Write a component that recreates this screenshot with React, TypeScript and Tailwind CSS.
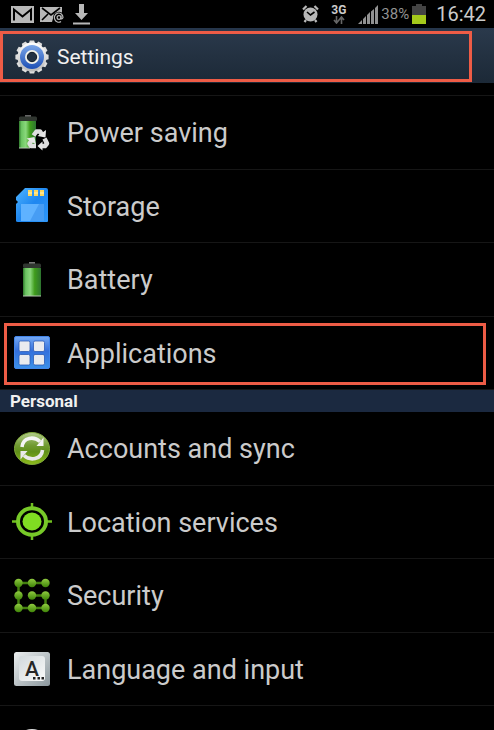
import type { ReactNode } from "react";

function GmailIcon() {
  return (
    <svg width="23" height="17" viewBox="0 0 23 17" aria-hidden="true">
      <rect width="23" height="17" fill="#b8b8b8" />
      <path d="M3 14.500V3.500L11.500 10.500L20 3.500V14.500" fill="none" stroke="#000" strokeWidth="2" />
    </svg>
  );
}

function MailIcon() {
  return (
    <svg width="25" height="18" viewBox="0 0 25 18" aria-hidden="true">
      <path d="M0 2H22V9L14 10L12 17H0Z" fill="#b8b8b8" />
      <path d="M2 3L11 10L20 3M2 15L8 9M20 14L14 9" fill="none" stroke="#000" strokeWidth="1.6" />
      <circle cx="19" cy="12.500" r="5.800" fill="#000" />
      <circle cx="19" cy="12.500" r="1.900" fill="none" stroke="#b8b8b8" strokeWidth="1.200" />
      <path d="M21 10.500V13.500Q22 14.500 23 12.500A4.300 4.600 0 1 0 21 16.500" fill="none" stroke="#b8b8b8" strokeWidth="1.200" />
    </svg>
  );
}

function DownloadIcon() {
  return (
    <svg width="17" height="21" viewBox="0 0 17 21" fill="#b8b8b8" aria-hidden="true">
      <path d="M6 0H11V9H15L8.500 16L2 9H6Z" />
      <rect y="18.500" width="17" height="2" />
    </svg>
  );
}

function AlarmIcon() {
  return (
    <svg width="17" height="18" viewBox="0 0 17 18" aria-hidden="true">
      <path d="M1 4.500L4.500 1M16 4.500L12.500 1M4 15L2.500 17M13 15L14.500 17" stroke="#b8b8b8" strokeWidth="2.2" />
      <circle cx="8.500" cy="9.500" r="7" fill="#b8b8b8" />
      <path d="M5 7L8.500 10L12.500 7" fill="none" stroke="#000" strokeWidth="1.6" />
    </svg>
  );
}

function DataIcon() {
  return (
    <svg width="12" height="8" viewBox="0 0 12 8" aria-hidden="true">
      <path d="M3.500 0V6M1 4L3.500 7L6 4M8.500 8V2M6 4L8.500 1L11 4" fill="none" stroke="#666" strokeWidth="1.6" />
    </svg>
  );
}

function SignalIcon() {
  return (
    <svg width="20" height="19" viewBox="0 0 20 19" fill="#929292" aria-hidden="true">
      <path d="M0 19L4 15V19ZM5 14L8 11V19H5ZM9 10L12 7V19H9ZM13 6.500L16 4V19H13ZM17 3L20 0V19H17Z" />
    </svg>
  );
}

function StatusBatteryIcon() {
  return (
    <svg width="14" height="20" viewBox="0 0 14 20" aria-hidden="true">
      <path d="M4 0H10V2H14V20H0V2H4Z" fill="#444" />
      <rect y="11" width="14" height="9" fill="#a5c91b" />
    </svg>
  );
}

function GearIcon() {
  const teeth = [0, 30, 60, 90, 120, 150, 180, 210, 240, 270, 300, 330];
  return (
    <svg width="36" height="34" viewBox="0 0 36 34" aria-hidden="true">
      <defs>
        <linearGradient id="gear-metal" x2="0" y2="1">
          <stop stopColor="#fff" />
          <stop offset="1" stopColor="#b9b9b9" />
        </linearGradient>
        <linearGradient id="gear-blue" x2="0" y2="1">
          <stop stopColor="#7ba6e8" />
          <stop offset="1" stopColor="#1d4fb5" />
        </linearGradient>
      </defs>
      {teeth.map((angle) => (
        <path key={angle} d="M14.800 4L15.800 .4H20.200L21.200 4Z" fill="#dedede" transform={`rotate(${angle} 18 17)`} />
      ))}
      <circle cx="18" cy="17" r="14.500" fill="url(#gear-metal)" />
      <circle cx="18" cy="17" r="12" fill="url(#gear-blue)" />
      <circle cx="18" cy="17" r="7" fill="#f2f2ea" />
      <circle cx="18" cy="17" r="4.700" fill="#233244" stroke="#111b28" />
    </svg>
  );
}

function BatteryDefs({ id }: { id: string }) {
  return (
    <defs>
      <linearGradient id={id}>
        <stop stopColor="#2f7a2c" />
        <stop offset=".15" stopColor="#6cc462" />
        <stop offset=".4" stopColor="#8ad87c" />
        <stop offset=".65" stopColor="#3f9c1c" />
        <stop offset="1" stopColor="#2d7430" />
      </linearGradient>
    </defs>
  );
}

function PowerSavingIcon() {
  return (
    <svg width="38" height="38" viewBox="0 0 38 38" aria-hidden="true">
      <BatteryDefs id="power-green" />
      <rect x="12" y="1" width="6" height="3" fill="#666" />
      <rect x="6" y="2.500" width="18" height="4.500" rx="1.500" fill="#303630" />
      <rect x="6" y="7" width="17" height="27" fill="url(#power-green)" />
      <path d="M6 34H17" stroke="#b5c8b2" />
      {/* Recycling arrows */}
      <g fill="none" stroke="#dedede" strokeWidth="4.500" strokeLinejoin="round">
        <path d="M20.500 21.500L23.500 17.500H27L28.500 20" />
        <path d="M31.500 24.500L34 29.500L32 32H29" />
        <path d="M23 32H18L16.500 29.500L18.500 26.500" />
      </g>
      <path d="M24.500 22L32.500 23.500L33 16ZM29.500 27.500V36.500L24.500 32ZM13.500 24.500L21.500 23L23 30.500Z" fill="#e6e6e6" />
    </svg>
  );
}

function StorageIcon() {
  return (
    <svg width="38" height="38" viewBox="0 0 38 38" aria-hidden="true">
      <defs>
        <linearGradient id="card-blue" x2="1" y2="1">
          <stop stopColor="#4db4ff" />
          <stop offset=".5" stopColor="#1f87f0" />
          <stop offset="1" stopColor="#2f98fa" />
        </linearGradient>
      </defs>
      <path d="M12 1H33Q35 1 35 3V34Q35 35 34 35H5Q3 35 3 34V17L5 15L3 13V10Z" fill="url(#card-blue)" />
      <path d="M8 17H31V34H8Z" fill="#5fb2ff" />
      <path d="M26 17H31V34H17Z" fill="#479df4" />
      <path d="M15 3H19V9H15ZM21 3H25V9H21ZM27 3H31V9H27Z" fill="#ffd75a" />
      <path d="M15 6H19M21 6H25M27 6H31" stroke="#fff3bf" />
    </svg>
  );
}

function BatteryIcon() {
  return (
    <svg width="38" height="38" viewBox="0 0 38 38" aria-hidden="true">
      <BatteryDefs id="battery-green" />
      <rect x="16" y="1" width="6" height="3" fill="#777" />
      <rect x="10" y="2.500" width="18" height="4.500" rx="1.500" fill="#303630" />
      <rect x="10" y="7" width="18" height="28" fill="url(#battery-green)" />
      <path d="M10 35H28" stroke="#b5c8b2" />
    </svg>
  );
}

function ApplicationsIcon() {
  return (
    <svg width="38" height="38" viewBox="0 0 38 38" aria-hidden="true">
      <defs>
        <linearGradient id="apps-blue" x2="0" y2="1">
          <stop stopColor="#74a9f5" />
          <stop offset=".45" stopColor="#3470dc" />
          <stop offset="1" stopColor="#3b91ea" />
        </linearGradient>
      </defs>
      <rect x="1.500" y="2.500" width="35" height="32" rx="1.500" fill="url(#apps-blue)" stroke="#4385e8" />
      <g fill="#e9ebef" stroke="#2b5bb5" strokeWidth=".8">
        <rect x="6" y="7" width="11" height="10.500" rx="1.500" />
        <rect x="20.500" y="7" width="11" height="10.500" rx="1.500" />
        <rect x="6" y="20.500" width="11" height="10.500" rx="1.500" />
        <rect x="20.500" y="20.500" width="11" height="10.500" rx="1.500" />
      </g>
    </svg>
  );
}

function SyncIcon() {
  return (
    <svg width="38" height="38" viewBox="0 0 38 38" aria-hidden="true">
      <defs>
        <linearGradient id="sync-green" x2="0" y2="1">
          <stop stopColor="#b2cb8b" />
          <stop offset=".4" stopColor="#719b32" />
          <stop offset=".6" stopColor="#608f18" />
          <stop offset="1" stopColor="#8dbb1b" />
        </linearGradient>
      </defs>
      <ellipse cx="19" cy="18.500" rx="17.500" ry="16" fill="url(#sync-green)" stroke="#7fa73a" />
      <path d="M9 17C10 7 21 6 27 11.500" fill="none" stroke="#f4f4f4" strokeWidth="3.600" />
      <path d="M30.500 7.500V16H23.500Z" fill="#f4f4f4" />
      <path d="M29.500 20C28.500 30 17 31 11 25.500" fill="none" stroke="#e8e8e8" strokeWidth="3.600" />
      <path d="M7.500 29.500V21H14.500Z" fill="#e8e8e8" />
    </svg>
  );
}

function LocationIcon() {
  return (
    <svg width="40" height="38" viewBox="0 0 40 38" aria-hidden="true">
      <path d="M20 0V6M20 31V37M0 18.500H6M34 18.500H40" stroke="#70bf20" strokeWidth="2.5" />
      <ellipse cx="20" cy="18.500" rx="14" ry="13.200" fill="none" stroke="#77c928" strokeWidth="4" />
      <ellipse cx="20" cy="18.500" rx="9.500" ry="9" fill="#80dd22" />
    </svg>
  );
}

function SecurityIcon() {
  const dots = [
    [5.5, 6], [19, 6], [32.5, 6],
    [5.5, 18.5], [19, 18.5], [32.5, 18.5],
    [5.5, 31], [19, 31], [32.5, 31],
  ];
  return (
    <svg width="38" height="38" viewBox="0 0 38 38" aria-hidden="true">
      <defs>
        <linearGradient id="dot-green" x2="0" y2="1">
          <stop stopColor="#8fca40" />
          <stop offset="1" stopColor="#3f8508" />
        </linearGradient>
      </defs>
      <path d="M32.500 6H5.500V31H32.500V18.500H19" fill="none" stroke="#44800f" strokeWidth="2.500" />
      {dots.map(([x, y]) => (
        <circle key={`${x}-${y}`} cx={x} cy={y} r="4.200" fill="url(#dot-green)" />
      ))}
    </svg>
  );
}

function LanguageIcon() {
  return (
    <svg width="38" height="38" viewBox="0 0 38 38" aria-hidden="true">
      <defs>
        <linearGradient id="key-edge" x2="1" y2="1">
          <stop stopColor="#eceff0" />
          <stop offset="1" stopColor="#8b979d" />
        </linearGradient>
        <linearGradient id="key-face" x2="1" y2="1">
          <stop stopColor="#d2d9dc" />
          <stop offset="1" stopColor="#fafafa" />
        </linearGradient>
      </defs>
      <rect x="1" y="2" width="36" height="34" rx="2.500" fill="url(#key-edge)" />
      <rect x="6" y="6" width="26" height="25" rx="3" fill="url(#key-face)" />
      <text x="19" y="26" textAnchor="middle" fill="#262626" className="font-['Roboto',sans-serif] text-[21px] font-medium">A</text>
      <path d="M20 27H22.500V29.500H20ZM24.500 27H27V29.500H24.500ZM28.500 27H31V29.500H28.500Z" fill="#222" />
    </svg>
  );
}

function NextIcon() {
  return (
    <svg width="38" height="38" viewBox="0 0 38 38" aria-hidden="true">
      <circle cx="19" cy="19" r="15" fill="none" stroke="#ddd" strokeWidth="4" />
    </svg>
  );
}

type Item = { label: string; icon: ReactNode; highlighted?: boolean };

const deviceItems: Item[] = [
  { label: "Power saving", icon: <PowerSavingIcon /> },
  { label: "Storage", icon: <StorageIcon /> },
  { label: "Battery", icon: <BatteryIcon /> },
  { label: "Applications", icon: <ApplicationsIcon />, highlighted: true },
];

const personalItems: Item[] = [
  { label: "Accounts and sync", icon: <SyncIcon /> },
  { label: "Location services", icon: <LocationIcon /> },
  { label: "Security", icon: <SecurityIcon /> },
  { label: "Language and input", icon: <LanguageIcon /> },
];

function SettingsRow({ label, icon, highlighted }: Item) {
  return (
    <li className="relative h-[74px] border-b border-[#161616] even:h-[73px]">
      <button type="button" className="flex h-full w-full items-center gap-[15px] pl-3 text-left text-[27px] text-[#cbcbcb]">
        <span className="flex w-10 shrink-0 justify-center">{icon}</span>
        <span className="pt-[2px]">{label}</span>
      </button>
      {highlighted && (
        <span className="pointer-events-none absolute top-[6px] right-2 bottom-1 left-1 border-[3px] border-[#ee5c46]" />
      )}
    </li>
  );
}

export default function App() {
  return (
    <div className="flex h-screen flex-col overflow-hidden bg-black font-['Roboto',sans-serif] text-[#cbcbcb]">
      {/* Status bar */}
      <div className="flex h-7 shrink-0 items-center justify-between pr-2 pl-[11px]">
        <div className="flex items-center gap-[6px]">
          <GmailIcon />
          <MailIcon />
          <span className="ml-[2px]">
            <DownloadIcon />
          </span>
        </div>
        <div className="flex items-center">
          <AlarmIcon />
          <span className="ml-3 flex flex-col items-center text-[12px] leading-3 font-bold">
            3G
            <DataIcon />
          </span>
          <span className="ml-3">
            <SignalIcon />
          </span>
          <span className="mx-[3px] text-[15px] text-[#929292]">38%</span>
          <StatusBatteryIcon />
          <span className="ml-2.5 text-[20px]">16:42</span>
        </div>
      </div>

      {/* Title bar */}
      <header className="relative flex h-[55px] shrink-0 items-center gap-[7px] border-t-2 border-[#26364b] bg-linear-to-b from-[#2a394b] to-[#1c2937] pl-3.5">
        <GearIcon />
        <h1 className="pt-[2px] text-[21px] text-[#f0f0f0]">Settings</h1>
        <span className="pointer-events-none absolute top-px right-[22px] bottom-px left-0 border-[3px] border-[#ee5c46]" />
      </header>

      <main>
        <ul className="mt-3 border-t border-[#161616]">
          {deviceItems.map((item) => (
            <SettingsRow key={item.label} {...item} />
          ))}
        </ul>
        <h2 className="h-[22px] bg-[#1b2940] pl-2.5 text-[17px] leading-[22px] font-bold text-[#f0f0f0]">Personal</h2>
        <ul>
          {personalItems.map((item) => (
            <SettingsRow key={item.label} {...item} />
          ))}
        </ul>
        <div className="flex pt-[21px] pl-[13px]">
          <NextIcon />
        </div>
      </main>
    </div>
  );
}
